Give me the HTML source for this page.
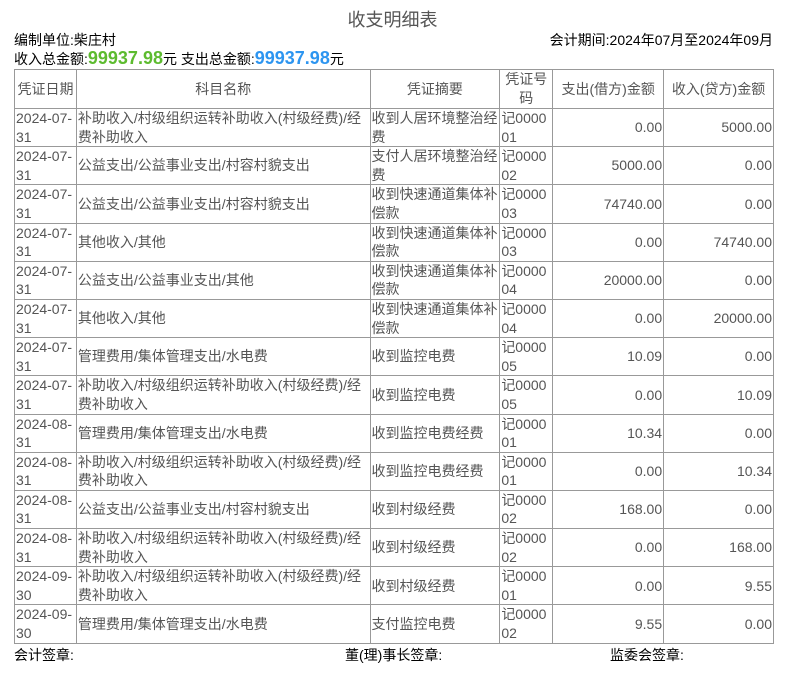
<!DOCTYPE html>
<html><head><meta charset="utf-8"><style>
body{margin:0;width:785px;height:688px;background:#fff;font-family:"Liberation Sans","Noto Sans CJK SC",sans-serif;font-size:14px;color:#000;position:relative}
.t{position:absolute;left:0;width:785px;text-align:center;top:6px;font-size:18px;color:#555}
.l{position:absolute;left:14px}
.r{position:absolute;right:12px}
.g{color:#5dbb2f;font-weight:bold;font-size:18px}
.b{color:#2d95f0;font-weight:bold;font-size:18px}
table{position:absolute;left:14px;top:69px;border-collapse:collapse;width:760px;color:#555;font-size:14px}
td,th{border:1px solid #999;padding:0 1px;line-height:18.6px;height:37px;font-weight:normal;vertical-align:middle;word-break:break-all}
th{height:38px}
td.n{text-align:right}
.f{position:absolute;top:645px}
</style></head><body>
<div class="t">收支明细表</div>
<div class="l" style="top:30px">编制单位:柴庄村</div>
<div class="r" style="top:30px">会计期间:2024年07月至2024年09月</div>
<div class="l" style="top:48px">收入总金额:<span class="g">99937.98</span>元 支出总金额:<span class="b">99937.98</span>元</div>
<table>
<colgroup><col style="width:62px"><col style="width:294px"><col style="width:130px"><col style="width:53px"><col style="width:111px"><col style="width:110px"></colgroup>
<tr><th>凭证日期</th><th>科目名称</th><th>凭证摘要</th><th>凭证号码</th><th>支出(借方)金额</th><th>收入(贷方)金额</th></tr>
<tr><td>2024-07-31</td><td>补助收入/村级组织运转补助收入(村级经费)/经费补助收入</td><td>收到人居环境整治经费</td><td>记000001</td><td class="n">0.00</td><td class="n">5000.00</td></tr>
<tr><td>2024-07-31</td><td>公益支出/公益事业支出/村容村貌支出</td><td>支付人居环境整治经费</td><td>记000002</td><td class="n">5000.00</td><td class="n">0.00</td></tr>
<tr><td>2024-07-31</td><td>公益支出/公益事业支出/村容村貌支出</td><td>收到快速通道集体补偿款</td><td>记000003</td><td class="n">74740.00</td><td class="n">0.00</td></tr>
<tr><td>2024-07-31</td><td>其他收入/其他</td><td>收到快速通道集体补偿款</td><td>记000003</td><td class="n">0.00</td><td class="n">74740.00</td></tr>
<tr><td>2024-07-31</td><td>公益支出/公益事业支出/其他</td><td>收到快速通道集体补偿款</td><td>记000004</td><td class="n">20000.00</td><td class="n">0.00</td></tr>
<tr><td>2024-07-31</td><td>其他收入/其他</td><td>收到快速通道集体补偿款</td><td>记000004</td><td class="n">0.00</td><td class="n">20000.00</td></tr>
<tr><td>2024-07-31</td><td>管理费用/集体管理支出/水电费</td><td>收到监控电费</td><td>记000005</td><td class="n">10.09</td><td class="n">0.00</td></tr>
<tr><td>2024-07-31</td><td>补助收入/村级组织运转补助收入(村级经费)/经费补助收入</td><td>收到监控电费</td><td>记000005</td><td class="n">0.00</td><td class="n">10.09</td></tr>
<tr><td>2024-08-31</td><td>管理费用/集体管理支出/水电费</td><td>收到监控电费经费</td><td>记000001</td><td class="n">10.34</td><td class="n">0.00</td></tr>
<tr><td>2024-08-31</td><td>补助收入/村级组织运转补助收入(村级经费)/经费补助收入</td><td>收到监控电费经费</td><td>记000001</td><td class="n">0.00</td><td class="n">10.34</td></tr>
<tr><td>2024-08-31</td><td>公益支出/公益事业支出/村容村貌支出</td><td>收到村级经费</td><td>记000002</td><td class="n">168.00</td><td class="n">0.00</td></tr>
<tr><td>2024-08-31</td><td>补助收入/村级组织运转补助收入(村级经费)/经费补助收入</td><td>收到村级经费</td><td>记000002</td><td class="n">0.00</td><td class="n">168.00</td></tr>
<tr><td>2024-09-30</td><td>补助收入/村级组织运转补助收入(村级经费)/经费补助收入</td><td>收到村级经费</td><td>记000001</td><td class="n">0.00</td><td class="n">9.55</td></tr>
<tr><td>2024-09-30</td><td>管理费用/集体管理支出/水电费</td><td>支付监控电费</td><td>记000002</td><td class="n">9.55</td><td class="n">0.00</td></tr>
</table>
<div class="f" style="left:14px">会计签章:</div>
<div class="f" style="left:345px">董(理)事长签章:</div>
<div class="f" style="left:610px">监委会签章:</div>
</body></html>
